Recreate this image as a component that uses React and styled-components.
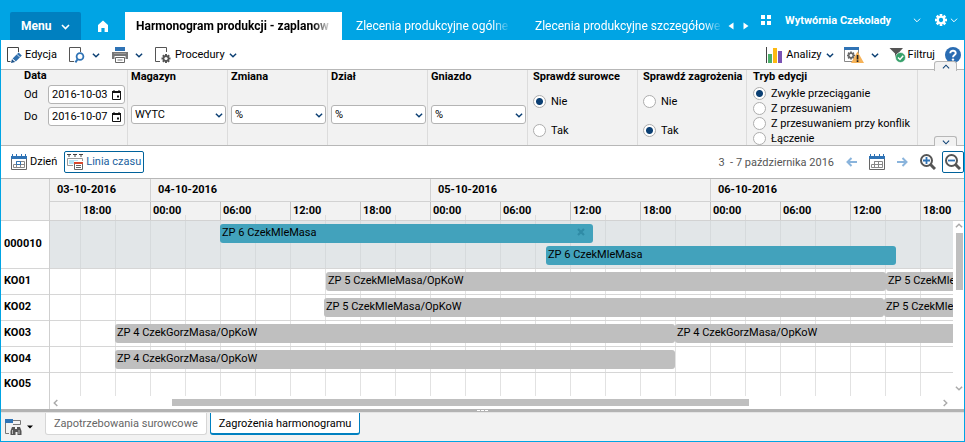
import React, { useState } from "react";
import styled, { createGlobalStyle, css } from "styled-components";

const GlobalStyle = createGlobalStyle`
  *, *::before, *::after { box-sizing: border-box; }
  body { margin: 0; background: #00a4e4; }
  body, button, input, select {
    font-family: Roboto, "Liberation Sans", sans-serif;
    font-size: 11px;
    color: #000;
  }
  button { cursor: pointer; }
`;

const HOUR_LINE = "#c4c4c4";
const NAVY = "#0b3f73";

/* ---------- shell ---------- */

const Window = styled.main`
  display: flex;
  flex-direction: column;
  min-height: 100vh;
  background: #fff;
  border: solid #00a4e4;
  border-width: 0 1px 1px;
  overflow: hidden;
`;

const PlainButton = styled.button`
  display: inline-flex;
  align-items: center;
  gap: ${(p) => p.$gap || 3}px;
  padding: 0;
  border: 0;
  background: none;
  color: ${(p) => p.$color || "#000"};
  line-height: 16px;
  white-space: nowrap;
`;

const Icon = styled.svg`
  display: block;
  flex: none;
`;

/* ---------- header ---------- */

const Header = styled.header`
  display: flex;
  height: 40px;
  padding-left: 9px;
  background: #00a4e4;
  color: #fff;
`;

const MenuButton = styled.button`
  align-self: flex-end;
  display: flex;
  align-items: center;
  gap: 10px;
  height: 28px;
  width: 71px;
  padding: 0 11px;
  border: 0;
  border-radius: 2px 2px 0 0;
  background: #0080c0;
  color: #fff;
  font-size: 12px;
  font-weight: 700;
`;

const HomeLink = styled.a`
  align-self: flex-end;
  display: flex;
  align-items: center;
  justify-content: center;
  width: 44px;
  height: 28px;
`;

const Tabs = styled.nav`
  display: flex;
  align-items: flex-end;
  gap: 3px;
  flex: 1;
  min-width: 0;
`;

const TabLink = styled.a`
  display: block;
  flex: 0 1 ${(p) => p.$basis}px;
  min-width: 0;
  height: 28px;
  padding: 0 4px 0 11px;
  line-height: 28px;
  font-size: 12px;
  text-decoration: none;
  color: ${(p) => (p.$active ? "#000" : "#fff")};
  background: ${(p) => (p.$active ? "#fff" : "transparent")};
  font-weight: ${(p) => (p.$active ? 700 : 400)};
`;

const FadeText = styled.span`
  display: inline-block;
  max-width: 100%;
  overflow: hidden;
  white-space: nowrap;
  mask-image: linear-gradient(to right, #000 calc(100% - 16px), rgba(0, 0, 0, 0.15));
`;

const TabArrows = styled.div`
  display: flex;
  align-self: flex-end;
  align-items: center;
  gap: 9px;
  height: 28px;
`;

const Account = styled.div`
  display: flex;
  align-items: center;
  padding: 0 6px 0 12px;
`;

const Company = styled.button`
  display: flex;
  align-items: center;
  justify-content: space-between;
  width: 136px;
  margin: 0 14px;
  padding: 0;
  border: 0;
  background: none;
  color: #fff;
  font-weight: 700;
`;

/* ---------- toolbar ---------- */

const Toolbar = styled.div`
  display: flex;
  align-items: center;
  justify-content: space-between;
  height: 29px;
  padding: 0 3px 0 6px;
`;

const ToolGroup = styled.div`
  display: flex;
  align-items: center;
  gap: ${(p) => p.$gap}px;
`;

/* ---------- filters ---------- */

const Filters = styled.form`
  position: relative;
  display: grid;
  grid-template-columns: 127px repeat(4, 100px) 110px 109px 171px 1fr;
  height: 77px;
  border: solid #b7b7b7;
  border-width: 1px 0;
  background: #f2f2f2;
`;

const FilterCell = styled.fieldset`
  display: flex;
  flex-direction: column;
  min-width: 0;
  margin: 0;
  padding: 0 0 0 ${(p) => p.$pad || 3}px;
  border: 0;
  border-right: 1px solid #dcdcdc;
  overflow: hidden;
`;

const FilterTitle = styled.label`
  font-weight: 700;
  line-height: 14px;
  white-space: nowrap;
`;

const DateTitle = styled(FilterTitle)`
  line-height: 12px;
  margin-bottom: 3px;
`;

const DateRow = styled.div`
  display: grid;
  grid-template-columns: 24px 77px;
  align-items: center;
  height: 19px;
  margin-bottom: 3px;
`;

const fieldFrame = css`
  border: 1px solid #b4b4b4;
  border-radius: 3px;
  background: #fff;
`;

const DateField = styled.span`
  ${fieldFrame}
  display: flex;
  align-items: center;
  height: 19px;
  padding: 0 3px;
`;

const DateInput = styled.input`
  flex: 1;
  min-width: 0;
  padding: 0;
  border: 0;
  outline: 0;
  background: none;
`;

const SelectFrame = styled.div`
  ${fieldFrame}
  position: relative;
  display: flex;
  align-items: center;
  width: 95px;
  height: 19px;
  margin-top: 21px;
`;

const Select = styled.select`
  appearance: none;
  width: 100%;
  height: 17px;
  padding: 0 18px 0 3px;
  border: 0;
  background: none;
`;

const SelectArrow = styled.span`
  position: absolute;
  right: 2px;
  pointer-events: none;
`;

const RadioStack = styled.div`
  display: flex;
  flex-direction: column;
  padding-top: ${(p) => (p.$dense ? 2 : 10)}px;
  gap: ${(p) => (p.$dense ? 0 : 14)}px;
`;

const RadioLabel = styled.label`
  display: flex;
  align-items: center;
  gap: 5px;
  height: 15px;
  line-height: 15px;
  white-space: nowrap;
`;

const Radio = styled.input`
  appearance: none;
  flex: none;
  width: 13px;
  height: 13px;
  margin: 0;
  border: 1px solid #adadad;
  border-radius: 50%;
  background: #fff;
  &:checked {
    background: radial-gradient(circle, ${NAVY} 3px, #fff 4px);
  }
`;

const Collapse = styled.button`
  position: absolute;
  right: 7px;
  ${(p) => (p.$top ? "top: -9px;" : "bottom: -1px;")}
  display: flex;
  align-items: center;
  justify-content: center;
  width: 23px;
  height: 10px;
  padding: 0;
  border: 1px solid #b7b7b7;
  border-bottom: 0;
  border-radius: 3px 3px 0 0;
  background: #f2f2f2;
`;

/* ---------- view bar ---------- */

const ViewBar = styled.div`
  display: flex;
  align-items: center;
  justify-content: space-between;
  height: 32px;
  padding-left: 10px;
`;

const FramedButton = styled(PlainButton)`
  justify-content: center;
  width: ${(p) => p.$width}px;
  height: 22px;
  border: 1px solid #00629b;
  border-radius: 2px;
`;

const Range = styled.span`
  color: #555;
  white-space: pre;
`;

/* ---------- timeline ---------- */

const Chart = styled.section`
  display: flex;
  flex: 1;
  min-height: 0;
  border-top: 1px solid #b7b7b7;
`;

const Resources = styled.div`
  flex: none;
  width: 49px;
  border-right: 1px solid #cfcfcf;
`;

const Corner = styled.div`
  height: 42px;
  background: #f2f2f2;
  border-bottom: 1px solid #d2d2d2;
`;

const rowSize = css`
  height: ${(p) => 4 + p.$lanes * 22}px;
  border-bottom: 1px solid #d6d6d6;
  &:last-child { border-bottom: 0; height: 23px; }
`;

const ResourceName = styled.div`
  ${rowSize}
  display: flex;
  align-items: center;
  padding-left: 3px;
  padding-bottom: 3px;
  font-weight: 700;
`;

const Timeline = styled.div`
  flex: 1;
  min-width: 0;
  display: flex;
  flex-direction: column;
`;

const ScaleRow = styled.div`
  display: flex;
  overflow: hidden;
  height: ${(p) => p.$height}px;
  padding-right: ${(p) => p.$inset || 0}px;
  border-bottom: 1px solid #d2d2d2;
  background: #f2f2f2;
`;

const Day = styled.div`
  flex: none;
  width: ${(p) => p.$width}px;
  padding-left: 7px;
  line-height: 21px;
  font-weight: 700;
  & + & { border-left: 1px solid #d2d2d2; }
`;

const Hours = styled.div`
  display: flex;
  flex: 1;
  overflow: hidden;
`;

const Hour = styled.div`
  flex: none;
  width: ${(p) => p.$width}px;
  padding-left: 2px;
  line-height: 17px;
  font-weight: 700;
  & + & {
    border-left: 1px solid ${HOUR_LINE};
    background: linear-gradient(#dedede, #dedede) 34px 100% / 1px 5px no-repeat;
  }
`;

const Body = styled.div`
  display: flex;
`;

const Lines = styled.div`
  flex: 1;
  min-width: 0;
`;

const Line = styled.div`
  ${rowSize}
  padding-top: 3px;
  overflow: hidden;
  background:
    repeating-linear-gradient(to right, transparent 0 30px, ${(p) => (p.$shaded ? "#d6dadc" : "#e2e2e2")} 30px 31px, transparent 31px 35px),
    ${(p) => (p.$shaded ? "#e2e6e8" : "#fff")};
`;

const Lane = styled.div`
  display: flex;
  height: 22px;
`;

const Bar = styled.div`
  display: flex;
  flex: none;
  align-items: center;
  justify-content: space-between;
  height: 19px;
  padding: 0 8px 3px 2px;
  border-radius: 3px;
  background: ${(p) => (p.$tone === "teal" ? "#42a2bc" : "#bfbfbf")};
  white-space: nowrap;
  overflow: hidden;
`;

const VScroll = styled.div`
  display: flex;
  flex-direction: column;
  align-items: center;
  flex: none;
  width: 11px;
  padding: 1px 0 4px;
`;

const VThumb = styled.div`
  width: 7px;
  height: 57px;
  margin: 3px 0 auto 2px;
  background: #bfbfbf;
`;

const HScroll = styled.div`
  display: flex;
  align-items: center;
  height: 13px;
  padding: 0 15px 0 2px;
`;

const HTrack = styled.div`
  flex: 1;
  margin: 0 4px;
  padding-left: 12%;
  padding-right: 21%;
`;

const HThumb = styled.div`
  height: 7px;
  background: #bfbfbf;
`;

/* ---------- bottom ---------- */

const Splitter = styled.div`
  display: flex;
  justify-content: center;
  align-items: center;
  gap: 1px;
  height: 3px;
  background: #b3b3b3;
`;

const Grip = styled.span`
  width: 3px;
  height: 1px;
  background: #fff;
`;

const Footer = styled.footer`
  display: flex;
  height: 29px;
  padding-left: 4px;
  border-top: 1px solid #e4e4e4;
  background: #f2f2f2;
`;

const FooterTool = styled(PlainButton)`
  width: 40px;
`;

const FooterTab = styled.button`
  height: 22px;
  margin-right: 3px;
  padding: 0 8px;
  background: #fff;
  border: solid ${(p) => (p.$active ? "#0080c0" : "#d6d6d6")};
  border-width: 0 1px ${(p) => (p.$active ? 2 : 1)}px;
  border-radius: 0 0 3px 3px;
  color: ${(p) => (p.$active ? "#000" : "#666")};
`;

/* ---------- icons ---------- */

const Chevron = ({ color = NAVY, dir = "down", size = 8, weight = 1.6, ...rest }) => {
  const d = {
    down: "M1 3 L4.5 6.5 L8 3",
    up: "M1 6 L4.5 2.5 L8 6",
    left: "M6 1 L2.5 4.5 L6 8",
    right: "M3 1 L6.5 4.5 L3 8",
  }[dir];
  return (
    <Icon width={size} height={size} viewBox="0 0 9 9" fill="none" stroke={color} strokeWidth={weight} {...rest}>
      <path d={d} />
    </Icon>
  );
};

const HomeIcon = () => (
  <Icon width="12" height="12" viewBox="0 0 12 12" fill="#fff">
    <path d="M6 0.4 L11 5 V12 H7.6 V8 H4.4 V12 H1 V5 Z" />
  </Icon>
);

const Triangle = ({ left }) => (
  <Icon width="6" height="8" viewBox="0 0 6 8" fill="#fff">
    <path d={left ? "M5.5 0.5 V7.5 L0.5 4 Z" : "M0.5 0.5 V7.5 L5.5 4 Z"} />
  </Icon>
);

const TilesIcon = () => (
  <Icon width="10" height="10" viewBox="0 0 10 10" fill="#fff">
    <path d="M0 0h4v4H0zM6 0h4v4H6zM0 6h4v4H0zM6 6h4v4H6z" />
  </Icon>
);

const TEETH = [0, 45, 90, 135, 180, 225, 270, 315];

const Gear = ({ cx, cy, r, color, hole }) => (
  <g fill={color}>
    {TEETH.map((a) => (
      <rect key={a} x={cx - r * 0.22} y={cy - r} width={r * 0.44} height={r * 0.5} transform={`rotate(${a} ${cx} ${cy})`} />
    ))}
    <circle cx={cx} cy={cy} r={r * 0.72} />
    <circle cx={cx} cy={cy} r={r * 0.36} fill={hole} />
  </g>
);

const SettingsIcon = () => (
  <Icon width="12" height="12" viewBox="0 0 12 12">
    <Gear cx={6} cy={6} r={6} color="#fff" hole="#00a4e4" />
  </Icon>
);

const EditIcon = () => (
  <Icon width="16" height="16" viewBox="0 0 16 16" fill="none">
    <path d="M3.5 14.5H0.5V0.5H11.5V5" stroke="#444" />
    <path d="M5.6 11.4 L11.6 5.4 L14.8 8.6 L8.8 14.4 Z" fill="#2f6fae" />
    <path d="M4 16 L5 12 L8.2 15 Z" fill="#1a4f86" />
    <path d="M9.8 7.2 L13 10.4" stroke="#fff" strokeWidth="0.8" />
    <path d="M6 12.4 L7.8 14.2" stroke="#fff" strokeWidth="0.8" />
  </Icon>
);

const PreviewIcon = () => (
  <Icon width="16" height="16" viewBox="0 0 16 16" fill="none">
    <path d="M5 14.5H0.5V0.5H11.5V5" stroke="#555" />
    <circle cx="11" cy="9.500" r="3.400" stroke="#2f73b5" strokeWidth="1.800" />
    <path d="M8.600 12.200 L6.400 15.400" stroke="#2f73b5" strokeWidth="2" />
  </Icon>
);

const PrintIcon = () => (
  <Icon width="16" height="16" viewBox="0 0 16 16">
    <path d="M3 0h10v4H3z" fill="#2f73b5" />
    <path d="M0 5h16v7h-2.500V9h-11v3H0z" fill="#777" />
    <path d="M2 6h12v1H2z" fill="#999" />
    <path d="M3.500 10.500h9v5h-9z" fill="#fff" stroke="#666" />
    <path d="M5.500 13h5" stroke="#777" />
  </Icon>
);

const ProcedureIcon = () => (
  <Icon width="16" height="16" viewBox="0 0 16 16" fill="none">
    <path d="M5 14.500H0.500V0.500H11.500V5" stroke="#555" />
    <Gear cx={11} cy={11.500} r={4.500} color="#555" hole="#fff" />
  </Icon>
);

const ChartIcon = () => (
  <Icon width="16" height="16" viewBox="0 0 16 16">
    <path d="M0 0h1v16H0z" fill="#444" />
    <path d="M2 7h4v9H2z" fill="#4caf6a" />
    <path d="M7 1h4v15H7z" fill="#fdb913" />
    <path d="M12 4h4v12h-4z" fill="#7a52b3" />
  </Icon>
);

const AlertIcon = () => (
  <Icon width="20" height="16" viewBox="0 0 20 16">
    <path d="M0.500 0.500h14v14H0.500z" fill="#fff" stroke="#888" />
    <path d="M0 0h15v3H0z" fill="#2f73b5" />
    <Gear cx={7} cy={8.500} r={4} color="#666" hole="#fff" />
    <path d="M13.500 4.500 L20 16 H7 Z" fill="#f6b359" />
    <path d="M12.700 8h1.700v4.500h-1.700zM12.700 13.300h1.700v1.700h-1.700z" fill="#222" />
  </Icon>
);

const FilterIcon = () => (
  <Icon width="17" height="16" viewBox="0 0 17 16">
    <path d="M0.500 1 H14 L9 6.500 V12 L6 9.500 V6.500 Z" fill="#555" />
    <circle cx="11.500" cy="10.500" r="5" fill="#35a06a" stroke="#fff" strokeWidth="0.600" />
    <path d="M9 10.500 L11 12.500 L14.200 8.800" fill="none" stroke="#fff" strokeWidth="1.500" />
  </Icon>
);

const HelpIcon = () => (
  <Icon width="16" height="16" viewBox="0 0 16 16" fill="none">
    <circle cx="8" cy="8" r="8" fill="#2a6cb2" />
    <path d="M5.300 6.200 C5.300 2.800 10.800 2.900 10.700 6.200 C10.600 8 8 8 8 10.200" stroke="#fff" strokeWidth="2" />
    <circle cx="8" cy="12.600" r="1.200" fill="#fff" />
  </Icon>
);

const DateIcon = () => (
  <Icon width="9" height="10" viewBox="0 0 9 10" fill="none">
    <path d="M0.500 1.500h8v8h-8z" stroke="#111" />
    <path d="M0 1h9v2H0zM1.500 0h1v1h-1zM6.500 0h1v1h-1zM5 5.500h2v2H5z" fill="#111" />
  </Icon>
);

const CalendarIcon = ({ accent = "#2f73b5" }) => (
  <Icon width="16" height="16" viewBox="0 0 16 16" fill="none">
    <path d="M0.500 4.500V15.500H15.500V4.500" stroke="#666" />
    <path d="M0 2h16v3H0z" fill="#2f73b5" />
    <path d="M1 0h1v2H1zM5 0h1v2H5zM10 0h1v2h-1zM14 0h1v2h-1z" fill="#2f73b5" />
    <path d="M5.500 7.500h8v6h-11v-3h11M5.500 7.500v6M9.500 7.500v6" stroke="#888" />
    <path d="M5.500 7.500h4v3h-4z" stroke={accent} />
  </Icon>
);

const TimelineIcon = () => (
  <Icon width="16" height="16" viewBox="0 0 16 16" fill="none">
    <path d="M6 11.500H0.500V4.500H15.500V7" stroke="#999" />
    <path d="M0 0.500h4M6 0.500h4M12 0.500h4M2 0v3M8 0v3M14 0v3" stroke="#444" />
    <path d="M2 6h9v1H7v3H2z" fill="#b5e4f5" />
    <path d="M7.500 8.500h8v7h-8z" fill="#fff" stroke="#666" />
    <path d="M7 8h9v2H7z" fill="#d9472b" />
    <path d="M9 11.500h5M9 13.500h5" stroke="#666" />
  </Icon>
);

const ArrowIcon = ({ left }) => (
  <Icon width="11" height="10" viewBox="0 0 11 10" fill="none" stroke="#8ab4dc" strokeWidth="2">
    <path d={left ? "M11 5H1.500M5.500 1L1.500 5L5.500 9" : "M0 5H9.500M5.500 1L9.500 5L5.500 9"} />
  </Icon>
);

const ZoomIcon = ({ plus }) => (
  <Icon width="16" height="16" viewBox="0 0 16 16" fill="none">
    <circle cx="6.500" cy="6.500" r="5.500" stroke="#555" strokeWidth="2" />
    <path d="M10.500 10.500L15 15" stroke="#555" strokeWidth="3" />
    <path d={plus ? "M3 6.500h7M6.500 3v7" : "M3 6.500h7"} stroke="#2f73b5" strokeWidth="1.800" />
  </Icon>
);

const SearchListIcon = () => (
  <Icon width="17" height="17" viewBox="0 0 17 17" fill="none">
    <path d="M0.500 4v10.500H4M8 1.500h7.500v4H8" stroke="#777" />
    <path d="M0 0h8v4H0z" fill="#2f73b5" />
    <path d="M7 8h3v2h2V8h3l1.500 4v4h-4v-3h-2v3h-5v-4z" fill="#555" />
    <path d="M7.500 11v4M14 11v4" stroke="#bbb" />
  </Icon>
);

const CaretIcon = () => (
  <Icon width="6" height="4" viewBox="0 0 6 4">
    <path d="M0 0.500h6L3 3.500z" fill="#000" />
  </Icon>
);

const CloseMark = () => (
  <Icon width="8" height="8" viewBox="0 0 8 8" stroke="#2f8ba6" strokeWidth="2.200">
    <path d="M1 1l6 6M7 1l-6 6" />
  </Icon>
);

/* ---------- data ---------- */

const TABS = [
  { label: "Harmonogram produkcji - zaplanow", basis: 217, active: true },
  { label: "Zlecenia produkcyjne ogólne", basis: 176 },
  { label: "Zlecenia produkcyjne szczegółowe", basis: 204 },
];

const DAYS = [
  { label: "03-10-2016", width: 100 },
  { label: "04-10-2016", width: 280 },
  { label: "05-10-2016", width: 280 },
  { label: "06-10-2016", width: 280 },
];

const HOURS = [
  "", "18:00", "00:00", "06:00", "12:00", "18:00", "00:00",
  "06:00", "12:00", "18:00", "00:00", "06:00", "12:00", "18:00",
];

const RESOURCES = [
  {
    name: "000010",
    shaded: true,
    lanes: [
      [{ gap: 170, width: 373, label: "ZP 6 CzekMleMasa", tone: "teal", closable: true }],
      [{ gap: 496, width: 350, label: "ZP 6 CzekMleMasa", tone: "teal" }],
    ],
  },
  {
    name: "KO01",
    lanes: [[
      { gap: 276, width: 560, label: "ZP 5 CzekMleMasa/OpKoW" },
      { gap: 0, width: 560, label: "ZP 5 CzekMleMasa/OpKoW" },
    ]],
  },
  {
    name: "KO02",
    lanes: [[
      { gap: 274, width: 560, label: "ZP 5 CzekMleMasa/OpKoW" },
      { gap: 0, width: 560, label: "ZP 5 CzekMleMasa/OpKoW" },
    ]],
  },
  {
    name: "KO03",
    lanes: [[
      { gap: 65, width: 560, label: "ZP 4 CzekGorzMasa/OpKoW" },
      { gap: 0, width: 560, label: "ZP 4 CzekGorzMasa/OpKoW" },
    ]],
  },
  { name: "KO04", lanes: [[{ gap: 65, width: 560, label: "ZP 4 CzekGorzMasa/OpKoW" }]] },
  { name: "KO05", lanes: [[]] },
];

const SELECTS = [
  { id: "magazyn", label: "Magazyn", value: "WYTC" },
  { id: "zmiana", label: "Zmiana", value: "%" },
  { id: "dzial", label: "Dział", value: "%" },
  { id: "gniazdo", label: "Gniazdo", value: "%" },
];

const MODES = ["Zwykłe przeciąganie", "Z przesuwaniem", "Z przesuwaniem przy konflik", "Łączenie"];

/* ---------- parts ---------- */

function DateRange() {
  return (
    <FilterCell $pad={23}>
      <DateTitle as="div">Data</DateTitle>
      {[["od", "Od", "2016-10-03"], ["do", "Do", "2016-10-07"]].map(([id, label, value]) => (
        <DateRow key={id}>
          <label htmlFor={id}>{label}</label>
          <DateField>
            <DateInput id={id} defaultValue={value} />
            <PlainButton type="button" aria-label="Kalendarz"><DateIcon /></PlainButton>
          </DateField>
        </DateRow>
      ))}
    </FilterCell>
  );
}

function RadioGroup({ title, name, options, initial, dense, pad }) {
  const [value, setValue] = useState(initial);
  return (
    <FilterCell $pad={pad}>
      <FilterTitle as="div">{title}</FilterTitle>
      <RadioStack $dense={dense}>
        {options.map((o) => (
          <RadioLabel key={o}>
            <Radio type="radio" name={name} checked={value === o} onChange={() => setValue(o)} />
            {o}
          </RadioLabel>
        ))}
      </RadioStack>
    </FilterCell>
  );
}

function FilterPanel() {
  return (
    <Filters>
      <DateRange />
      {SELECTS.map((s) => (
        <FilterCell key={s.id}>
          <FilterTitle htmlFor={s.id}>{s.label}</FilterTitle>
          <SelectFrame>
            <Select id={s.id} defaultValue={s.value}>
              <option>{s.value}</option>
            </Select>
            <SelectArrow><Chevron /></SelectArrow>
          </SelectFrame>
        </FilterCell>
      ))}
      <RadioGroup title="Sprawdź surowce" name="surowce" options={["Nie", "Tak"]} initial="Nie" pad={5} />
      <RadioGroup title="Sprawdź zagrożenia" name="zagrozenia" options={["Nie", "Tak"]} initial="Tak" pad={5} />
      <RadioGroup title="Tryb edycji" name="tryb" options={MODES} initial={MODES[0]} dense pad={6} />
      <Collapse type="button" $top aria-label="Zwiń"><Chevron dir="up" weight={1.2} /></Collapse>
      <Collapse type="button" aria-label="Rozwiń"><Chevron weight={1.2} /></Collapse>
    </Filters>
  );
}

function Schedule() {
  return (
    <Chart>
      <Resources>
        <Corner />
        {RESOURCES.map((r) => (
          <ResourceName key={r.name} $lanes={r.lanes.length}>{r.name}</ResourceName>
        ))}
      </Resources>
      <Timeline>
        <ScaleRow $height={23}>
          {DAYS.map((d) => <Day key={d.label} $width={d.width}>{d.label}</Day>)}
        </ScaleRow>
        <ScaleRow $height={19} $inset={11}>
          <Hours>
            {HOURS.map((h, i) => <Hour key={i} $width={i ? 70 : 30}>{h}</Hour>)}
          </Hours>
        </ScaleRow>
        <Body>
          <Lines>
            {RESOURCES.map((r) => (
              <Line key={r.name} $lanes={r.lanes.length} $shaded={r.shaded}>
                {r.lanes.map((bars, i) => (
                  <Lane key={i}>
                    {bars.map((b, j) => (
                      <Bar key={j} $tone={b.tone} style={{ marginLeft: b.gap, width: b.width }}>
                        {b.label}
                        {b.closable && <CloseMark />}
                      </Bar>
                    ))}
                  </Lane>
                ))}
              </Line>
            ))}
          </Lines>
          <VScroll>
            <Chevron dir="up" color="#aaa" />
            <VThumb />
            <Chevron color="#aaa" />
          </VScroll>
        </Body>
        <HScroll>
          <Chevron dir="left" color="#aaa" />
          <HTrack><HThumb /></HTrack>
          <Chevron dir="right" color="#aaa" />
        </HScroll>
      </Timeline>
    </Chart>
  );
}

export default function App() {
  return (
    <>
      <GlobalStyle />
      <Window>
        <Header>
          <MenuButton>Menu <Chevron color="#fff" size={9} /></MenuButton>
          <HomeLink href="#home" aria-label="Start"><HomeIcon /></HomeLink>
          <Tabs>
            {TABS.map((t) => (
              <TabLink key={t.label} href="#tab" $basis={t.basis} $active={t.active}>
                <FadeText>{t.label}</FadeText>
              </TabLink>
            ))}
          </Tabs>
          <TabArrows>
            <PlainButton aria-label="Poprzednia"><Triangle left /></PlainButton>
            <PlainButton aria-label="Następna"><Triangle /></PlainButton>
          </TabArrows>
          <Account>
            <PlainButton aria-label="Aplikacje"><TilesIcon /></PlainButton>
            <Company>Wytwórnia Czekolady <Chevron color="#fff" weight={1.1} /></Company>
            <PlainButton aria-label="Ustawienia">
              <SettingsIcon /><Chevron color="#fff" weight={1.1} />
            </PlainButton>
          </Account>
        </Header>

        <Toolbar>
          <ToolGroup $gap={12}>
            <PlainButton $gap={2}><EditIcon /> Edycja</PlainButton>
            <PlainButton $gap={7} aria-label="Podgląd"><PreviewIcon /><Chevron /></PlainButton>
            <PlainButton $gap={7} aria-label="Drukuj"><PrintIcon /><Chevron /></PlainButton>
            <PlainButton $gap={4}><ProcedureIcon /> Procedury <Chevron /></PlainButton>
          </ToolGroup>
          <ToolGroup $gap={10}>
            <PlainButton $gap={4}><ChartIcon /> Analizy <Chevron /></PlainButton>
            <PlainButton $gap={7} aria-label="Zagrożenia"><AlertIcon /><Chevron /></PlainButton>
            <PlainButton $gap={2}><FilterIcon /> Filtruj</PlainButton>
            <PlainButton aria-label="Pomoc"><HelpIcon /></PlainButton>
          </ToolGroup>
        </Toolbar>

        <FilterPanel />

        <ViewBar>
          <ToolGroup $gap={7}>
            <PlainButton><CalendarIcon /> Dzień</PlainButton>
            <FramedButton $width={80} $color="#1a5f9e"><TimelineIcon /> Linia czasu</FramedButton>
          </ToolGroup>
          <ToolGroup $gap={12}>
            <Range>{"3  - 7 października 2016"}</Range>
            <PlainButton aria-label="Wstecz"><ArrowIcon left /></PlainButton>
            <PlainButton aria-label="Dzisiaj"><CalendarIcon accent="#888" /></PlainButton>
            <PlainButton aria-label="Dalej"><ArrowIcon /></PlainButton>
            <ToolGroup $gap={6}>
              <PlainButton aria-label="Powiększ"><ZoomIcon plus /></PlainButton>
              <FramedButton $width={22} aria-label="Pomniejsz"><ZoomIcon /></FramedButton>
            </ToolGroup>
          </ToolGroup>
        </ViewBar>

        <Schedule />

        <Splitter><Grip /><Grip /><Grip /></Splitter>
        <Footer>
          <FooterTool aria-label="Szukaj" $gap={5}><SearchListIcon /><CaretIcon /></FooterTool>
          <FooterTab>Zapotrzebowania surowcowe</FooterTab>
          <FooterTab $active>Zagrożenia harmonogramu</FooterTab>
        </Footer>
      </Window>
    </>
  );
}
